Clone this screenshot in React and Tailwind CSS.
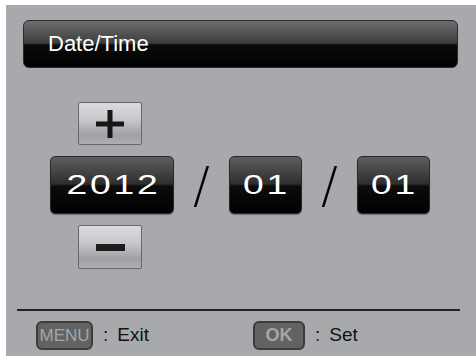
const silver =
  "border border-[#66686b] rounded-[2px] bg-[linear-gradient(to_bottom,#d9dbde_0%,#c6c8cc_40%,#9fa1a5_78%,#aeb0b4_100%)] flex items-center justify-center";

const blackBox =
  "rounded-[5px] border border-[#2a2a2a] bg-[linear-gradient(to_bottom,#5e5e5e_0%,#2e2e2e_48%,#0c0c0c_52%,#000000_100%)] shadow-[0_1px_1px_rgba(0,0,0,0.35)] flex items-center justify-center text-white";

function DigitBox({ value, width }) {
  return (
    <div className={blackBox} style={{ width }}>
      <span
        className="inline-block text-[27px] leading-none tracking-[2px] pl-[2px] scale-x-[1.38]"
        style={{ fontFamily: '"Liberation Sans", sans-serif' }}
      >
        {value}
      </span>
    </div>
  );
}

function Slash() {
  return (
    <div className="w-[55px] flex items-center justify-center">
      <span
        className="text-[50px] leading-none font-extralight text-black"
        style={{ fontFamily: '"DejaVu Sans", sans-serif' }}
      >
        /
      </span>
    </div>
  );
}

function Key({ label, bold, width }) {
  return (
    <div
      className={`h-[29px] rounded-[6px] border-2 border-[#3c3c3c] bg-[#626262] flex items-center justify-center text-[#a6a6a6] ${
        bold ? "font-bold text-[18px]" : "text-[17px]"
      }`}
      style={{ width }}
    >
      {label}
    </div>
  );
}

export default function App() {
  return (
    <div
      className="w-[476px] h-[359px] bg-white pt-[5px] pl-[6px]"
      style={{ fontFamily: '"Liberation Sans", Arial, sans-serif' }}
    >
      <div className="w-[470px] h-[351px] bg-[#a8a9ac] flex flex-col">
        <div className="mt-[15px] ml-[17px] w-[435px] h-[48px] rounded-[6px] border border-[#2b2b2b] bg-[linear-gradient(to_bottom,#6c6c6c_0%,#3e3e3e_48%,#0b0b0b_52%,#000000_100%)] flex items-center pl-[24px]">
          <span className="text-[22px] text-white leading-none">Date/Time</span>
        </div>

        <div className={`${silver} mt-[34px] ml-[72px] w-[64px] h-[43px]`}>
          <svg width="28" height="28" viewBox="0 0 28 28">
            <rect x="11.5" y="0" width="5" height="28" fill="#161616" />
            <rect x="0" y="11.5" width="28" height="5" fill="#161616" />
          </svg>
        </div>

        <div className="mt-[11px] ml-[44px] h-[58px] flex">
          <DigitBox value="2012" width={124} />
          <Slash />
          <DigitBox value="01" width={73} />
          <Slash />
          <DigitBox value="01" width={73} />
        </div>

        <div className={`${silver} mt-[11px] ml-[72px] w-[64px] h-[44px]`}>
          <svg width="29" height="7" viewBox="0 0 29 7">
            <rect x="0" y="0" width="29" height="7" fill="#1c1c1c" />
          </svg>
        </div>

        <div className="mt-[40px] ml-[11px] w-[443px] h-[2px] bg-[#222]" />

        <div className="mt-[10px] ml-[30px] flex items-center text-[19px] text-[#111]">
          <Key label="MENU" width={57} />
          <span className="ml-[10px]">:</span>
          <span className="ml-[9px]">Exit</span>
          <div className="ml-[104px]">
            <Key label="OK" bold width={52} />
          </div>
          <span className="ml-[10px]">:</span>
          <span className="ml-[9px]">Set</span>
        </div>
      </div>
    </div>
  );
}
